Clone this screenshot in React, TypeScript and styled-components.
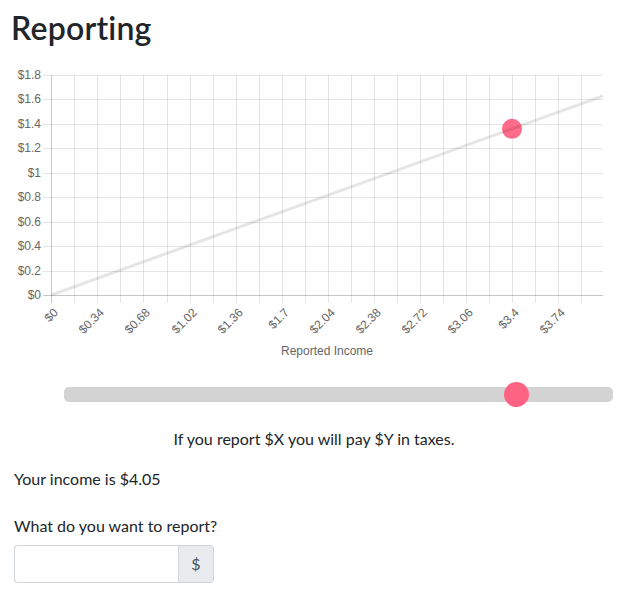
import styled, { createGlobalStyle } from 'styled-components';

const GlobalStyle = createGlobalStyle`
  body {
    margin: 0;
    background: #ffffff;
    color: #212529;
    font-family: Lato, "Noto Sans", sans-serif;
    font-size: 16px;
    line-height: 1.5;
  }
`;

const X0 = 51.3;
const X_END = 603;
const PX_PER_X = 135.5;
const Y0 = 235; // chart-local, zero line
const PX_PER_Y = 122.2;

const xTicks = Array.from({ length: 24 }, (_, k) => k);
const yTicks = Array.from({ length: 10 }, (_, k) => k);

const fmt = (v: number) => `$${Number(v.toFixed(2))}`;

export default function App() {
  const income = 4.05;
  const reported = 3.4;
  const rate = 0.4;
  const xMax = (X_END - X0) / PX_PER_X;

  return (
    <Page>
      <GlobalStyle />
      <Heading>Reporting</Heading>

      <ChartSvg width={633} height={302} viewBox="0 0 633 302">
        {yTicks.map((k) => {
          const y = Math.round(Y0 - k * 24.44) + 0.5;
          return (
            <g key={`y${k}`}>
              <line
                x1={43}
                x2={X_END}
                y1={y}
                y2={y}
                stroke={k === 0 ? 'rgba(0,0,0,0.22)' : 'rgba(0,0,0,0.1)'}
              />
              <AxisText x={41} y={y} textAnchor="end" dominantBaseline="middle">
                {fmt(k * 0.2)}
              </AxisText>
            </g>
          );
        })}
        {xTicks.map((k) => {
          const x = Math.round(X0 + k * 23.04) + 0.5;
          return (
            <g key={`x${k}`}>
              <line
                x1={x}
                x2={x}
                y1={15}
                y2={243}
                stroke={k === 0 ? 'rgba(0,0,0,0.22)' : 'rgba(0,0,0,0.1)'}
              />
              {k % 2 === 0 && (
                <AxisText
                  transform={`translate(${x + 5} ${251}) rotate(-45)`}
                  textAnchor="end"
                  dominantBaseline="middle"
                >
                  {fmt(k * 0.17)}
                </AxisText>
              )}
            </g>
          );
        })}
        <circle
          cx={X0 + reported * PX_PER_X}
          cy={Y0 - reported * rate * PX_PER_Y}
          r={10}
          fill="#ff6384"
          fillOpacity={0.95}
        />
        <line
          x1={X0}
          y1={Y0}
          x2={X_END}
          y2={Y0 - xMax * rate * PX_PER_Y}
          stroke="rgba(0,0,0,0.1)"
          strokeWidth={3}
        />
        <AxisText x={327} y={295} textAnchor="middle">
          Reported Income
        </AxisText>
      </ChartSvg>

      <SliderRow>
        <Slider type="range" min={0} max={income} step={0.01} defaultValue={reported} />
      </SliderRow>

      <Content>
        <Summary>If you report $X you will pay $Y in taxes.</Summary>
        <Line>Your income is ${income}</Line>
        <Label htmlFor="report">What do you want to report?</Label>
        <InputGroup>
          <TextInput id="report" type="text" />
          <Addon>$</Addon>
        </InputGroup>
      </Content>
    </Page>
  );
}

const Page = styled.div`
  width: 633px;
  padding-bottom: 9px;
`;

const Heading = styled.h2`
  margin: 0 0 0 11px;
  padding-top: 9px;
  height: 60px;
  box-sizing: border-box;
  font-size: 32px;
  font-weight: 600;
  line-height: 1.2;
  letter-spacing: 0.2px;
`;

const ChartSvg = styled.svg`
  display: block;
`;

const AxisText = styled.text`
  font-family: "Liberation Sans", Arial, sans-serif;
  font-size: 12px;
  fill: #666666;
`;

const SliderRow = styled.div`
  padding: 20px 20px 0 64px;
  height: 26px;
`;

const Slider = styled.input`
  -webkit-appearance: none;
  appearance: none;
  display: block;
  width: 100%;
  height: 15px;
  margin: 5px 0 0;
  border-radius: 5px;
  background: #d3d3d3;
  outline: none;

  &::-webkit-slider-thumb {
    -webkit-appearance: none;
    appearance: none;
    width: 25px;
    height: 25px;
    border-radius: 50%;
    background: #ff6384;
    border: none;
    cursor: pointer;
  }

  &::-moz-range-thumb {
    width: 25px;
    height: 25px;
    border-radius: 50%;
    background: #ff6384;
    border: none;
  }
`;

const Content = styled.div`
  padding: 19px 19px 0 14px;
`;

const Summary = styled.p`
  margin: 0 0 16px;
  text-align: center;
`;

const Line = styled.p`
  margin: 0 0 23px;
`;

const Label = styled.label`
  display: block;
  margin-bottom: 7px;
`;

const InputGroup = styled.div`
  display: flex;
  width: 200px;
  height: 38px;
`;

const TextInput = styled.input`
  flex: 1;
  min-width: 0;
  padding: 6px 12px;
  border: 1px solid #ced4da;
  border-right: none;
  border-radius: 4px 0 0 4px;
  font: inherit;
  color: #495057;
  outline: none;
`;

const Addon = styled.span`
  display: flex;
  align-items: center;
  justify-content: center;
  width: 34px;
  border: 1px solid #ced4da;
  border-radius: 0 4px 4px 0;
  background: #e9ecef;
  color: #495057;
`;
